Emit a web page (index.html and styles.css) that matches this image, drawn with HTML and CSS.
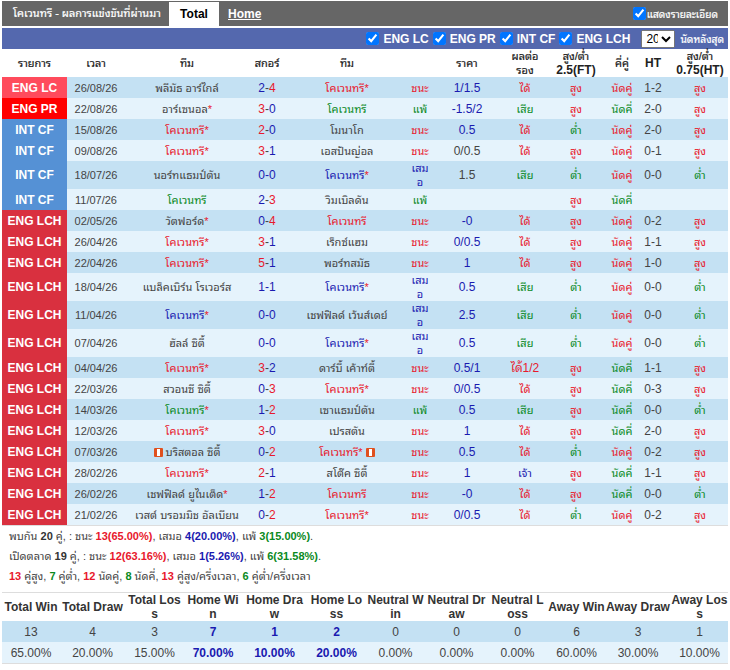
FILE: index.html
```html
<!DOCTYPE html>
<html>
<head>
<meta charset="utf-8">
<title>โคเวนทรี</title>
<link rel="stylesheet" href="styles.css">
</head>
<body>
<div class="wrap">
  <div class="topbar">
    <span class="title thai">โคเวนทรี - ผลการแข่งขันที่ผ่านมา</span>
    <span class="tab tab-on">Total</span>
    <span class="tab tab-link">Home</span>
    <label class="detail"><input type="checkbox" checked><span class="thai">แสดงรายละเอียด</span></label>
  </div>
  <div class="filter">
    <label><input type="checkbox" checked> ENG LC</label>
    <label><input type="checkbox" checked> ENG PR</label>
    <label><input type="checkbox" checked> INT CF</label>
    <label><input type="checkbox" checked> ENG LCH</label>
    <select class="count"><option>20</option></select>
    <span class="last thai">นัดหลังสุด</span>
  </div>
  <table class="games">
    <colgroup>
      <col class="c1"><col class="c2"><col class="c3"><col class="c4"><col class="c5"><col class="c6"><col class="c7"><col class="c8"><col class="c9"><col class="c10"><col class="c11"><col class="c12">
    </colgroup>
    <thead>
      <tr><th><span class="thai">รายการ</span></th><th><span class="thai">เวลา</span></th><th><span class="thai">ทีม</span></th><th><span class="thai">สกอร์</span></th><th><span class="thai">ทีม</span></th><th></th><th><span class="thai">ราคา</span></th><th><span class="thai">ผลต่อ<br>รอง</span></th><th><span class="thai">สูง/ต่ำ</span> 2.5(FT)</th><th><span class="thai">คี่คู่</span></th><th>HT</th><th><span class="thai">สูง/ต่ำ</span> 0.75(HT)</th></tr>
    </thead>
    <tbody>
      <tr><td class="lg lc">ENG LC</td><td class="dt">26/08/26</td><td>พลีมัธ อาร์ไกล์</td><td class="sc"><b>2</b>-<i>4</i></td><td class="r">โคเวนทรี*</td><td class="r">ชนะ</td><td class="b">1/1.5</td><td class="r">ได้</td><td class="r">สูง</td><td class="r">นัดคู่</td><td>1-2</td><td class="r">สูง</td></tr>
      <tr><td class="lg pr">ENG PR</td><td class="dt">22/08/26</td><td>อาร์เซนอล<span class="r">*</span></td><td class="sc"><i>3</i>-<b>0</b></td><td class="g">โคเวนทรี</td><td class="g">แพ้</td><td class="b">-1.5/2</td><td class="g">เสีย</td><td class="r">สูง</td><td class="g">นัดคี่</td><td>2-0</td><td class="r">สูง</td></tr>
      <tr><td class="lg cf">INT CF</td><td class="dt">15/08/26</td><td class="r">โคเวนทรี*</td><td class="sc"><i>2</i>-<b>0</b></td><td>โมนาโก</td><td class="r">ชนะ</td><td class="b">0.5</td><td class="r">ได้</td><td class="g">ต่ำ</td><td class="r">นัดคู่</td><td>2-0</td><td class="r">สูง</td></tr>
      <tr><td class="lg cf">INT CF</td><td class="dt">09/08/26</td><td class="r">โคเวนทรี*</td><td class="sc"><i>3</i>-<b>1</b></td><td>เอสปันญ่อล</td><td class="r">ชนะ</td><td>0/0.5</td><td class="r">ได้</td><td class="r">สูง</td><td class="r">นัดคู่</td><td>0-1</td><td class="r">สูง</td></tr>
      <tr><td class="lg cf">INT CF</td><td class="dt">18/07/26</td><td>นอร์ทแธมป์ตัน</td><td class="sc"><b>0-0</b></td><td class="b">โคเวนทรี<span class="r">*</span></td><td class="b wrapcell">เสมอ</td><td>1.5</td><td class="g">เสีย</td><td class="g">ต่ำ</td><td class="r">นัดคู่</td><td>0-0</td><td class="g">ต่ำ</td></tr>
      <tr><td class="lg cf">INT CF</td><td class="dt">11/07/26</td><td class="g">โคเวนทรี</td><td class="sc"><b>2</b>-<i>3</i></td><td>วิมเบิลดัน</td><td class="g">แพ้</td><td></td><td></td><td class="r">สูง</td><td class="g">นัดคี่</td><td></td><td></td></tr>
      <tr><td class="lg ch">ENG LCH</td><td class="dt">02/05/26</td><td>วัตฟอร์ด<span class="r">*</span></td><td class="sc"><b>0</b>-<i>4</i></td><td class="r">โคเวนทรี</td><td class="r">ชนะ</td><td class="b">-0</td><td class="r">ได้</td><td class="r">สูง</td><td class="r">นัดคู่</td><td>0-2</td><td class="r">สูง</td></tr>
      <tr><td class="lg ch">ENG LCH</td><td class="dt">26/04/26</td><td class="r">โคเวนทรี*</td><td class="sc"><i>3</i>-<b>1</b></td><td>เร็กซ์แฮม</td><td class="r">ชนะ</td><td class="b">0/0.5</td><td class="r">ได้</td><td class="r">สูง</td><td class="r">นัดคู่</td><td>1-1</td><td class="r">สูง</td></tr>
      <tr><td class="lg ch">ENG LCH</td><td class="dt">22/04/26</td><td class="r">โคเวนทรี*</td><td class="sc"><i>5</i>-<b>1</b></td><td>พอร์ทสมัธ</td><td class="r">ชนะ</td><td class="b">1</td><td class="r">ได้</td><td class="r">สูง</td><td class="r">นัดคู่</td><td>1-0</td><td class="r">สูง</td></tr>
      <tr><td class="lg ch">ENG LCH</td><td class="dt">18/04/26</td><td>แบล็คเบิร์น โรเวอร์ส</td><td class="sc"><b>1-1</b></td><td class="b">โคเวนทรี<span class="r">*</span></td><td class="b wrapcell">เสมอ</td><td class="b">0.5</td><td class="g">เสีย</td><td class="g">ต่ำ</td><td class="r">นัดคู่</td><td>0-0</td><td class="g">ต่ำ</td></tr>
      <tr><td class="lg ch">ENG LCH</td><td class="dt">11/04/26</td><td class="b">โคเวนทรี<span class="r">*</span></td><td class="sc"><b>0-0</b></td><td>เชฟฟิลด์ เว้นส์เดย์</td><td class="b wrapcell">เสมอ</td><td class="b">2.5</td><td class="g">เสีย</td><td class="g">ต่ำ</td><td class="r">นัดคู่</td><td>0-0</td><td class="g">ต่ำ</td></tr>
      <tr><td class="lg ch">ENG LCH</td><td class="dt">07/04/26</td><td>ฮัลล์ ซิตี้</td><td class="sc"><b>0-0</b></td><td class="b">โคเวนทรี<span class="r">*</span></td><td class="b wrapcell">เสมอ</td><td class="b">0.5</td><td class="g">เสีย</td><td class="g">ต่ำ</td><td class="r">นัดคู่</td><td>0-0</td><td class="g">ต่ำ</td></tr>
      <tr><td class="lg ch">ENG LCH</td><td class="dt">04/04/26</td><td class="r">โคเวนทรี*</td><td class="sc"><i>3</i>-<b>2</b></td><td>ดาร์บี้ เค้าท์ตี้</td><td class="r">ชนะ</td><td class="b">0.5/1</td><td class="r wide">ได้1/2</td><td class="r">สูง</td><td class="g">นัดคี่</td><td>1-1</td><td class="r">สูง</td></tr>
      <tr><td class="lg ch">ENG LCH</td><td class="dt">22/03/26</td><td>สวอนซี ซิตี้</td><td class="sc"><b>0</b>-<i>3</i></td><td class="r">โคเวนทรี*</td><td class="r">ชนะ</td><td class="b">0/0.5</td><td class="r">ได้</td><td class="r">สูง</td><td class="g">นัดคี่</td><td>0-3</td><td class="r">สูง</td></tr>
      <tr><td class="lg ch">ENG LCH</td><td class="dt">14/03/26</td><td class="g">โคเวนทรี<span class="r">*</span></td><td class="sc"><b>1</b>-<i>2</i></td><td>เซาแธมป์ตัน</td><td class="g">แพ้</td><td class="b">0.5</td><td class="g">เสีย</td><td class="r">สูง</td><td class="g">นัดคี่</td><td>0-0</td><td class="g">ต่ำ</td></tr>
      <tr><td class="lg ch">ENG LCH</td><td class="dt">12/03/26</td><td class="r">โคเวนทรี*</td><td class="sc"><i>3</i>-<b>0</b></td><td>เปรสตัน</td><td class="r">ชนะ</td><td class="b">1</td><td class="r">ได้</td><td class="r">สูง</td><td class="g">นัดคี่</td><td>2-0</td><td class="r">สูง</td></tr>
      <tr><td class="lg ch">ENG LCH</td><td class="dt">07/03/26</td><td><span class="card"></span> บริสตอล ซิตี้</td><td class="sc"><b>0</b>-<i>2</i></td><td class="r">โคเวนทรี* <span class="card"></span></td><td class="r">ชนะ</td><td class="b">0.5</td><td class="r">ได้</td><td class="g">ต่ำ</td><td class="r">นัดคู่</td><td>0-2</td><td class="r">สูง</td></tr>
      <tr><td class="lg ch">ENG LCH</td><td class="dt">28/02/26</td><td class="r">โคเวนทรี*</td><td class="sc"><i>2</i>-<b>1</b></td><td>สโต๊ค ซิตี้</td><td class="r">ชนะ</td><td class="b">1</td><td class="b">เจ้า</td><td class="r">สูง</td><td class="g">นัดคี่</td><td>1-1</td><td class="r">สูง</td></tr>
      <tr><td class="lg ch">ENG LCH</td><td class="dt">26/02/26</td><td>เชฟฟิลด์ ยูไนเต็ด<span class="r">*</span></td><td class="sc"><b>1</b>-<i>2</i></td><td class="r">โคเวนทรี</td><td class="r">ชนะ</td><td class="b">-0</td><td class="r">ได้</td><td class="r">สูง</td><td class="g">นัดคี่</td><td>0-0</td><td class="g">ต่ำ</td></tr>
      <tr><td class="lg ch">ENG LCH</td><td class="dt">21/02/26</td><td>เวสต์ บรอมมิช อัลเบียน</td><td class="sc"><b>0</b>-<i>2</i></td><td class="r">โคเวนทรี*</td><td class="r">ชนะ</td><td class="b">0/0.5</td><td class="r">ได้</td><td class="g">ต่ำ</td><td class="r">นัดคู่</td><td>0-2</td><td class="r">สูง</td></tr>
    </tbody>
  </table>
  <div class="summary">
    <p>พบกัน <strong>20</strong> คู่, : ชนะ <em class="r">13(65.00%)</em>, เสมอ <em class="b">4(20.00%)</em>, แพ้ <em class="g">3(15.00%)</em>.</p>
    <p>เปิดตลาด <strong>19</strong> คู่, : ชนะ <em class="r">12(63.16%)</em>, เสมอ <em class="b">1(5.26%)</em>, แพ้ <em class="g">6(31.58%)</em>.</p>
    <p><em class="r">13</em> คู่สูง, <em class="g">7</em> คู่ต่ำ, <em class="r">12</em> นัดคู่, <em class="g">8</em> นัดคี่, <em class="r">13</em> คู่สูง/ครึ่งเวลา, <em class="g">6</em> คู่ต่ำ/ครึ่งเวลา</p>
  </div>
  <table class="stats">
    <colgroup>
      <col class="s1"><col class="s2"><col class="s3"><col class="s4"><col class="s5"><col class="s6"><col class="s7"><col class="s8"><col class="s9"><col class="s10"><col class="s11"><col class="s12">
    </colgroup>
    <thead>
      <tr><th>Total Win</th><th>Total Draw</th><th>Total Loss</th><th>Home Win</th><th>Home Draw</th><th>Home Loss</th><th>Neutral Win</th><th>Neutral Draw</th><th>Neutral Loss</th><th>Away Win</th><th>Away Draw</th><th>Away Loss</th></tr>
    </thead>
    <tbody>
      <tr><td>13</td><td>4</td><td>3</td><td class="hm">7</td><td class="hm">1</td><td class="hm">2</td><td>0</td><td>0</td><td>0</td><td>6</td><td>3</td><td>1</td></tr>
      <tr><td>65.00%</td><td>20.00%</td><td>15.00%</td><td class="hm">70.00%</td><td class="hm">10.00%</td><td class="hm">20.00%</td><td>0.00%</td><td>0.00%</td><td>0.00%</td><td>60.00%</td><td>30.00%</td><td>10.00%</td></tr>
    </tbody>
  </table>
</div>
</body>
</html>
```

FILE: styles.css
```css
html, body { margin: 0; padding: 0; background: #fff; }
body { font-family: "Liberation Sans", "Noto Sans Thai Looped", Arial, sans-serif; font-size: 12px; color: #333; }
.wrap { width: 726px; padding: 1px 2px 0; }
.thai { font-weight: normal; -webkit-text-stroke: 0.2px currentColor; }

.topbar { display: flex; align-items: stretch; height: 25px; background: #666; color: #fff; }
.title { padding: 0 0 0 11px; line-height: 25px; white-space: nowrap; width: 156px; font-size: 11px; }
.tab { line-height: 24px; font-weight: bold; font-size: 12px; padding: 0 10px; margin-top: 1px; }
.tab-on { background: #fff; color: #000; width: 30px; text-align: center; }
.tab-link { color: #fff; text-decoration: underline; padding-left: 9px; }
.detail { margin-left: auto; display: flex; align-items: center; font-size: 10.2px; padding-right: 10px; }
.detail input { margin: 0 1px 0 0; width: 13px; height: 13px; }

.filter { display: flex; align-items: center; justify-content: flex-end; height: 21px; margin-top: 2px; background: #5468ae; color: #fff; font-weight: bold; padding-right: 4px; }
.filter label { display: flex; align-items: center; gap: 4px; margin-right: 4px; font-size: 12px; }
.filter input { margin: 0; width: 13px; height: 13px; }
.count { width: 34px; height: 18px; margin: 0 5px 0 7px; font: 12px "Liberation Sans", sans-serif; padding: 0; }
.last { font-size: 10.3px; }

.games { width: 726px; border-collapse: collapse; table-layout: fixed; }
.c1 { width: 65px; } .c2 { width: 58px; } .c3 { width: 124px; } .c4 { width: 36px; }
.c5 { width: 124px; } .c6 { width: 22px; } .c7 { width: 72px; } .c8 { width: 44px; }
.c9 { width: 58px; } .c10 { width: 34px; } .c11 { width: 28px; } .c12 { width: 61px; }
.games th { height: 28px; padding: 0; font-size: 12px; font-weight: bold; color: #222; text-align: center; line-height: 14px; }
.games th .thai { font-size: 11px; }
.games td { height: 21px; padding: 0; font-size: 11px; text-align: center; line-height: 14px; color: #444; }
.games td:nth-child(4), .games td:nth-child(7), .games td:nth-child(11), .games td.wide { font-size: 12px; }
.games th:last-child, .games td:last-child { padding-left: 5px; }
.games tbody tr:nth-child(odd) { background: #c4e1f3; }
.games tbody tr:nth-child(even) { background: #e5f3fc; }
.games td.lg { color: #fff; font-weight: bold; font-size: 12px; }
.games td.lc { background: #ff4b5c; }
.games td.pr { background: #f00; }
.games td.cf { background: #5591d5; }
.games td.ch { background: #d9303f; }
.games td.r, .r { color: #e8182c; }
.games td.g, .g { color: #0a8a1e; }
.games td.b, .b { color: #1a1ab0; }
.wrapcell { word-break: break-all; }
.sc b { font-weight: normal; color: #1a1ab0; }
.sc i { font-style: normal; color: #e8182c; }
.card { display: inline-block; position: relative; width: 9px; height: 9px; background: #e0501e; border-radius: 1px; vertical-align: -1px; }
.card::after { content: ""; position: absolute; left: 3px; top: 1px; width: 3px; height: 7px; background: #fff; }

.summary { padding: 0 7px; border-top: 1px solid #ddd; }
.summary p { margin: 0; line-height: 20px; font-size: 11px; color: #444; }
.summary strong { color: #333; }
.summary em { font-style: normal; font-weight: bold; }

.stats { width: 726px; border-collapse: collapse; table-layout: fixed; margin-top: 6px; border-top: 1px solid #ddd; border-bottom: 1px solid #ddd; }
.s1 { width: 58px; } .s2 { width: 65px; } .s3 { width: 59px; } .s4 { width: 58px; } .s5 { width: 65px; } .s6 { width: 58px; }
.s7 { width: 60px; } .s8 { width: 62px; } .s9 { width: 60px; } .s10 { width: 58px; } .s11 { width: 65px; } .s12 { width: 58px; }
.stats th { padding: 0; height: 28px; font-size: 12px; font-weight: bold; color: #333; line-height: 14px; text-align: center; word-break: break-all; }
.stats th:nth-child(n+6), .stats td:nth-child(n+6) { padding-left: 1px; }
.stats td { padding: 0; height: 21px; font-size: 12px; text-align: center; color: #444; }
.stats tbody tr:nth-child(odd) { background: #c4e1f3; }
.stats tbody tr:nth-child(even) { background: #e5f3fc; }
.stats td.hm { color: #1a1ab0; font-weight: bold; }
```
